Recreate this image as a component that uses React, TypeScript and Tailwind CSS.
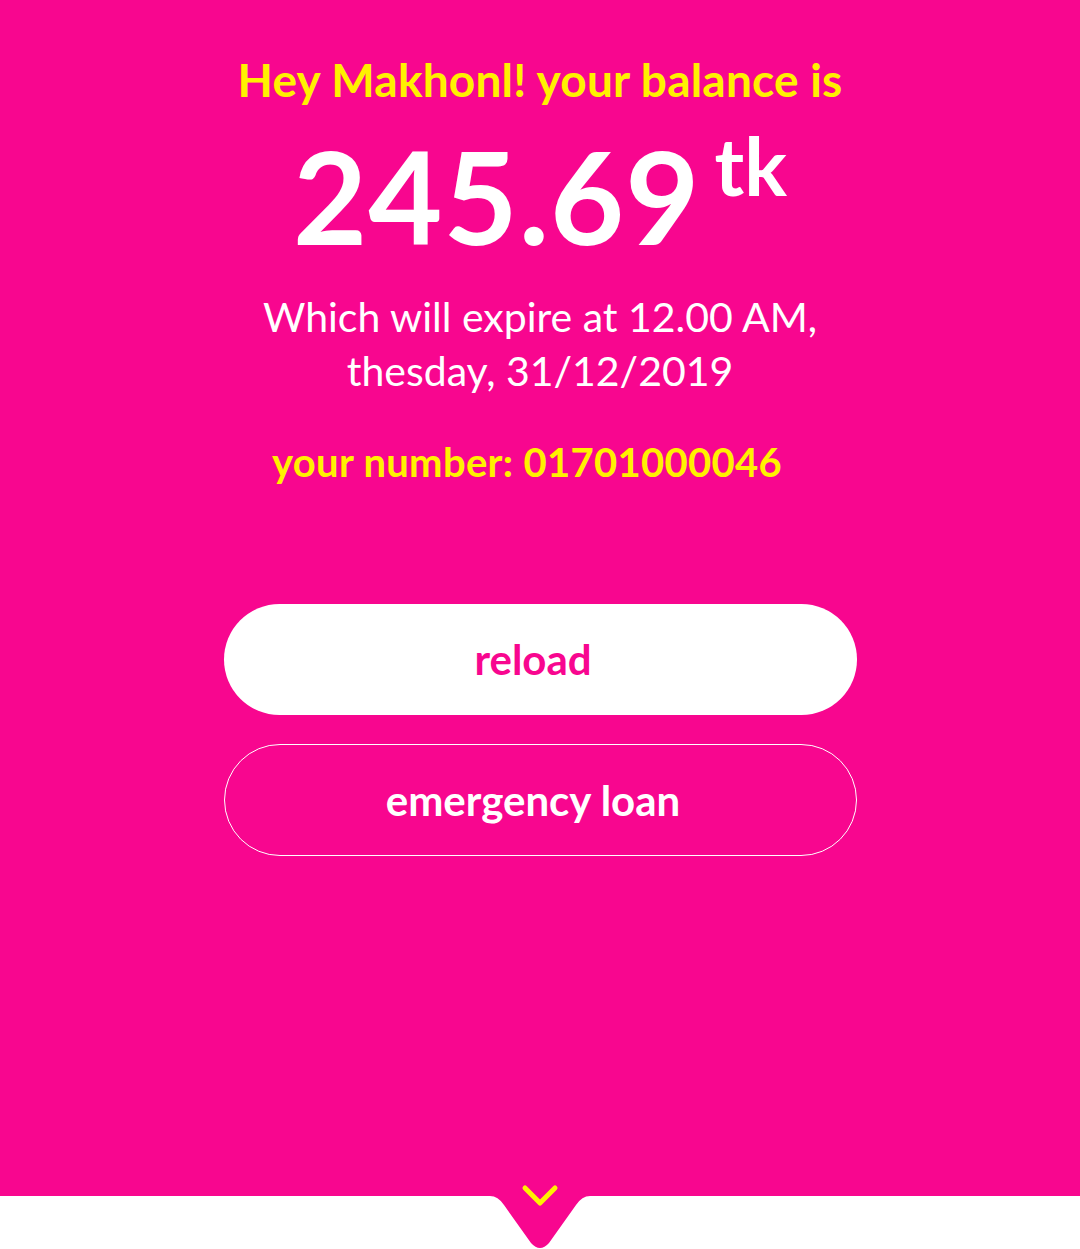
export default function App() {
  return (
    <div
      className="flex min-h-[1249px] w-full flex-col bg-[#F8068F]"
      style={{ fontFamily: 'Lato, "Open Sans", sans-serif' }}
    >
      {/* balance info */}
      <div className="flex flex-1 flex-col items-center pt-[52px]">
        <h1 className="text-[46px] font-bold leading-[56px] tracking-[0.2px] text-[#FFF100]">
          Hey Makhonl! your balance is
        </h1>

        <div className="mt-[28px] flex items-start text-white">
          <span className="text-[128px] font-bold leading-[120px] tracking-[1px]">245.69</span>
          <span className="ml-[14px] mt-[-12px] text-[80px] font-bold leading-[82px]">tk</span>
        </div>

        <p className="mt-[34px] text-center text-[41px] font-normal leading-[54px] text-white">
          Which will expire at 12.00 AM,
          <br />
          thesday, 31/12/2019
        </p>

        <p className="mt-[40px] pr-[26px] text-[40px] font-bold leading-[48px] tracking-[0.3px] text-[#FFF100]">
          your number: 01701000046
        </p>

        {/* actions */}
        <div className="mt-[118px] flex w-[633px] flex-col gap-[29px]">
          <button className="flex h-[111px] items-center justify-center rounded-full bg-white pr-[14px] text-[42px] font-bold text-[#F8068F]">
            reload
          </button>
          <button className="flex h-[112px] items-center justify-center rounded-full border border-white pr-[14px] text-[42px] font-bold text-white">
            emergency loan
          </button>
        </div>
      </div>

      {/* footer with notch */}
      <div className="relative h-[53px] bg-white">
        <svg
          className="absolute left-1/2 top-0 -translate-x-1/2"
          width="120"
          height="53"
          viewBox="0 0 120 53"
        >
          <path d="M0 0 H10 Q18 0 24 9 L51 47 Q60 57 69 47 L96 9 Q102 0 110 0 Z" fill="#F8068F" />
        </svg>
        <svg
          className="absolute left-1/2 top-[-13px] -translate-x-1/2"
          width="40"
          height="28"
          viewBox="0 0 40 28"
        >
          <path d="M5 5 L20 20 L35 5" fill="none" stroke="#FFF100" strokeWidth="5" strokeLinecap="round" strokeLinejoin="round" />
        </svg>
      </div>
    </div>
  )
}
